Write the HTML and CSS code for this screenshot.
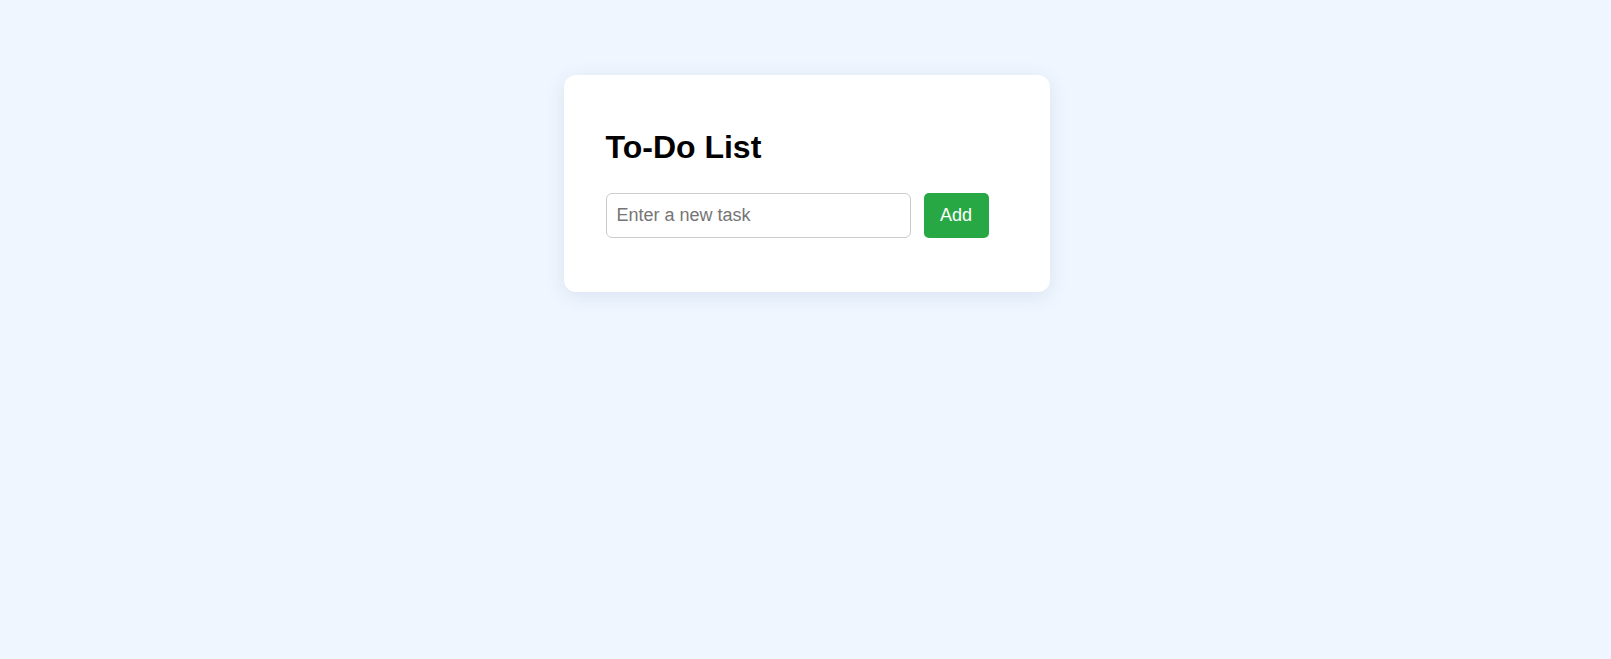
FILE: index.html
```html
<!DOCTYPE html>
<html lang="en">
<head>
    <meta charset="UTF-8" />
    <title>To-Do List</title>
    <link rel="stylesheet" href="styles.css">
</head>
<body>
<div class="container">
    <h1>To-Do List</h1>
    <form id="todoForm" class="todo-row">
        <input type="text" id="taskInput" placeholder="Enter a new task" />
        <button type="submit">Add</button>
    </form>
    <ul id="taskList"></ul>
</div>

<script>
    document.getElementById("todoForm").addEventListener("submit", function (e) {
        e.preventDefault();
        const input = document.getElementById("taskInput");
        const text = input.value.trim();
        if (!text) return;
        const li = document.createElement("li");
        li.innerText = text;
        document.getElementById("taskList").appendChild(li);
        input.value = "";
    });
</script>
</body>
</html>
```

FILE: styles.css
```css
body {
    font-family: 'Liberation Sans', Arial, sans-serif;
    margin: 0;
    padding: 75px 0 0;
    background: #eff6ff;
    min-height: 100vh;
    box-sizing: border-box;
}

.container {
    background: white;
    border-radius: 12px;
    padding: 30px 42px;
    box-shadow: 0 4px 20px rgba(30, 60, 110, 0.1);
    width: 486px;
    box-sizing: border-box;
    margin: 0 auto;
    position: relative;
    left: 1px;
}

h1 {
    font-size: 32px;
    margin: 24px 0 27px;
    color: #000;
}

.todo-row {
    display: flex;
    gap: 13px;
    margin-bottom: 24px;
}

input[type="text"] {
    width: 305px;
    padding: 11px 10px;
    font-size: 18px;
    font-family: inherit;
    border: 1px solid #ccc;
    border-radius: 6px;
    box-sizing: border-box;
}

button {
    width: 65px;
    padding: 10px 0;
    font-size: 18px;
    font-family: inherit;
    border: none;
    background-color: #28a745;
    color: white;
    border-radius: 5px;
    cursor: pointer;
}

button:hover {
    background-color: #218838;
}

#taskList {
    list-style: none;
    margin: 0;
    padding: 0;
}
```
